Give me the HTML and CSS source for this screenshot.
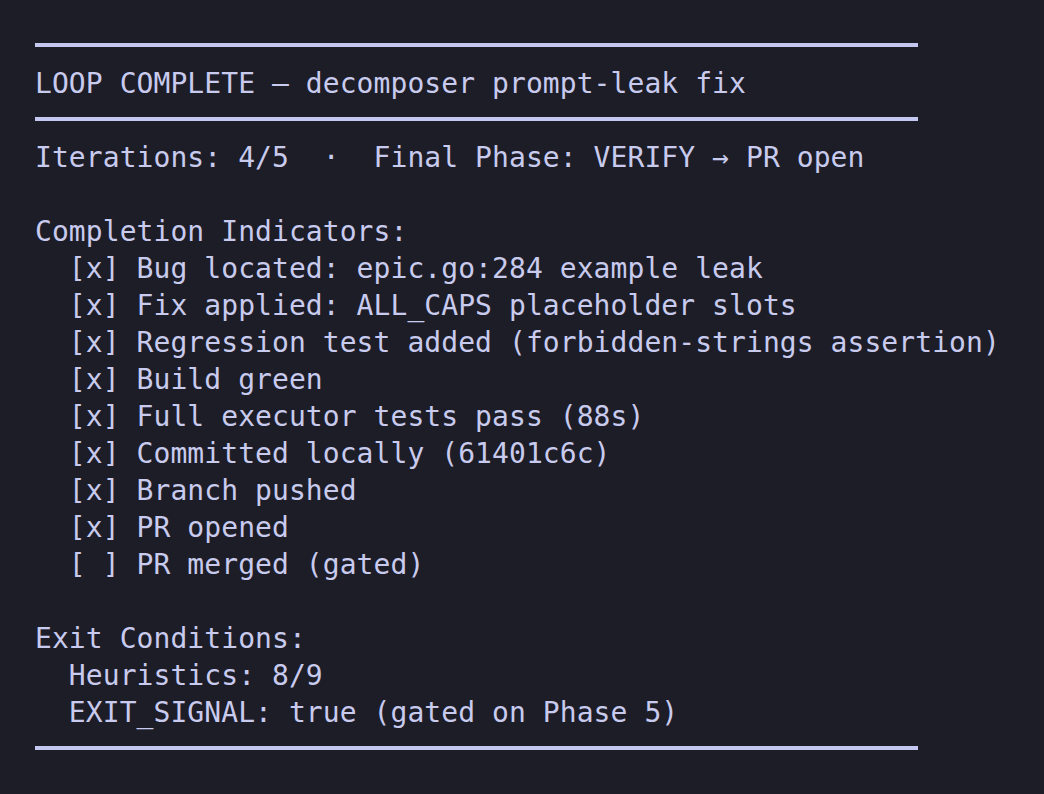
FILE: index.html
```html
<!DOCTYPE html>
<html lang="en">
<head>
<meta charset="utf-8">
<title>Loop complete</title>
<link rel="stylesheet" href="styles.css">
</head>
<body>
<main class="term">
  <div class="line rule"></div>
  <div class="line">LOOP COMPLETE — decomposer prompt-leak fix</div>
  <div class="line rule"></div>
  <div class="line">Iterations: 4/5  ·  Final Phase: VERIFY → PR open</div>
  <div class="line"></div>
  <div class="line">Completion Indicators:</div>
  <div class="line">  [x] Bug located: epic.go:284 example leak</div>
  <div class="line">  [x] Fix applied: ALL_CAPS placeholder slots</div>
  <div class="line">  [x] Regression test added (forbidden-strings assertion)</div>
  <div class="line">  [x] Build green</div>
  <div class="line">  [x] Full executor tests pass (88s)</div>
  <div class="line">  [x] Committed locally (61401c6c)</div>
  <div class="line">  [x] Branch pushed</div>
  <div class="line">  [x] PR opened</div>
  <div class="line">  [ ] PR merged (gated)</div>
  <div class="line"></div>
  <div class="line">Exit Conditions:</div>
  <div class="line">  Heuristics: 8/9</div>
  <div class="line">  EXIT_SIGNAL: true (gated on Phase 5)</div>
  <div class="line rule"></div>
</main>
</body>
</html>
```
FILE: styles.css
```css
html, body {
  margin: 0;
  padding: 0;
  background: #1d1d27;
}
body {
  width: 1044px;
  height: 794px;
  overflow: hidden;
}
.term {
  padding: 26px 0 0 35px;
  font-family: "DejaVu Sans Mono", "Liberation Mono", monospace;
  font-size: 28px;
  letter-spacing: 0.07px;
  color: #c8cbee;
}
.line {
  height: 35px;
  padding-top: 2px;
  line-height: 37px;
  white-space: pre;
}
.rule {
  height: 37px;
  padding-top: 0;
  display: flex;
  align-items: center;
}
.rule::before {
  content: "";
  display: block;
  width: 883px;
  height: 4px;
  background: #c4c8f0;
}
```
